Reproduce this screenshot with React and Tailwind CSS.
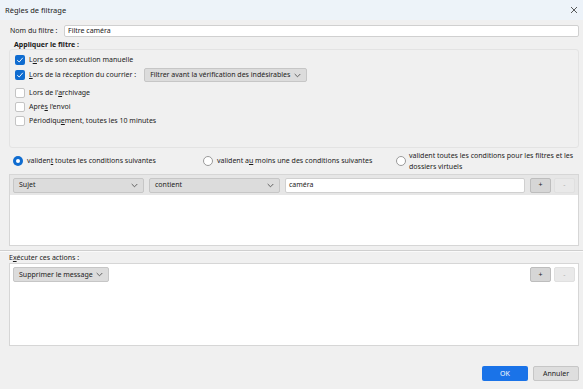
import React from "react";

function U({ children }) {
  return <span className="underline underline-offset-[1px]">{children}</span>;
}

function Check({ checked }) {
  return checked ? (
    <span className="w-[10px] h-[10px] rounded-[2px] bg-[#0f6cd0] flex items-center justify-center shrink-0">
      <svg width="8" height="8" viewBox="0 0 8 8">
        <path d="M1.2 4.2 L3.2 6 L6.8 1.8" fill="none" stroke="#fff" strokeWidth="0.9" />
      </svg>
    </span>
  ) : (
    <span className="w-[10px] h-[10px] rounded-[2px] bg-white border border-[#c4c4c4] shrink-0" />
  );
}

function Radio({ on }) {
  return on ? (
    <span className="w-[10px] h-[10px] rounded-full bg-[#0f6cd0] flex items-center justify-center shrink-0">
      <span className="w-[4px] h-[4px] rounded-full bg-white" />
    </span>
  ) : (
    <span className="w-[10px] h-[10px] rounded-full bg-white border border-[#9a9a9a] shrink-0" />
  );
}

function Chevron() {
  return (
    <svg width="7" height="5" viewBox="0 0 7 5" className="shrink-0">
      <path d="M0.7 1 L3.5 3.8 L6.3 1" fill="none" stroke="#444" strokeWidth="0.8" />
    </svg>
  );
}

function Select({ label, w }) {
  return (
    <div
      className={`h-[15px] ${w} rounded-[2px] bg-[#dcdcdc] border border-[#c6c6c6] flex items-center justify-between pl-[5px] pr-[5px] shrink-0`}
    >
      <span className="whitespace-nowrap">{label}</span>
      <Chevron />
    </div>
  );
}

function PlusMinus() {
  return (
    <div className="flex gap-[3px]">
      <div className="w-[21px] h-[15px] rounded-[2px] bg-[#d6d6d6] border border-[#bdbdbd] flex items-center justify-center text-[7px]">
        +
      </div>
      <div className="w-[21px] h-[15px] rounded-[2px] bg-[#e9e9e9] border border-[#e0e0e0] flex items-center justify-center text-[7px] text-[#b0b0b0]">
        -
      </div>
    </div>
  );
}

export default function App() {
  return (
    <div className="w-[583px] h-[389px] bg-[#f0f0f0] text-[#1b1b1b] text-[7px] leading-[10px] whitespace-nowrap font-['Segoe_UI','Noto_Sans',sans-serif] flex flex-col overflow-hidden">
      {/* barre de titre */}
      <div className="h-[20px] bg-[#edf3f9] flex items-center justify-between pl-[5px] pr-[5px] shrink-0">
        <span className="text-[7.5px]">Règles de filtrage</span>
        <svg width="8" height="8" viewBox="0 0 8 8">
          <path d="M1 1 L7 7 M7 1 L1 7" stroke="#333" strokeWidth="0.8" />
        </svg>
      </div>

      <div className="flex flex-col pl-[9px] pr-[4px] pt-[5px]">
        {/* nom du filtre */}
        <div className="flex items-center h-[12px]">
          <span className="pl-[1px] w-[55px] shrink-0">
            Nom du f<U>i</U>ltre :
          </span>
          <div className="flex-1 h-[12px] bg-white border border-[#d0d0d0] rounded-[2px] flex items-center pl-[3px]">
            Filtre caméra
          </div>
        </div>

        <div className="pl-[5px] mt-[4px] h-[8px] leading-[8px] font-bold">Appliquer le filtre :</div>

        <div className="h-[99px] border border-[#e3e3e3] rounded-[3px] flex flex-col pl-[5px] pt-[3px]">
          <div className="h-[14px] flex items-center gap-[4px]">
            <Check checked />
            <span>
              L<U>o</U>rs de son exécution manuelle
            </span>
          </div>
          <div className="h-[16px] flex items-center gap-[4px]">
            <Check checked />
            <span>
              <U>L</U>ors de la réception du courrier :
            </span>
            <div className="ml-[4px] h-[14px] rounded-[2px] bg-[#dcdcdc] border border-[#c6c6c6] flex items-center gap-[4px] px-[5px]">
              <span>Filtrer avant la vérification des indésirables</span>
              <Chevron />
            </div>
          </div>
          <div className="mt-[3px] h-[14px] flex items-center gap-[4px]">
            <Check />
            <span>
              Lors de l'<U>a</U>rchivage
            </span>
          </div>
          <div className="h-[14px] flex items-center gap-[4px]">
            <Check />
            <span>
              Aprè<U>s</U> l'envoi
            </span>
          </div>
          <div className="h-[14px] flex items-center gap-[4px]">
            <Check />
            <span>
              Périodiqu<U>e</U>ment, toutes les 10 minutes
            </span>
          </div>
        </div>

        {/* type de correspondance */}
        <div className="h-[26px] flex items-center pl-[4px]">
          <div className="w-[190px] flex items-center gap-[4px]">
            <Radio on />
            <span>
              validen<U>t</U> toutes les conditions suivantes
            </span>
          </div>
          <div className="w-[193px] flex items-center gap-[4px]">
            <Radio />
            <span>
              valident a<U>u</U> moins une des conditions suivantes
            </span>
          </div>
          <div className="flex-1 flex items-center gap-[3px]">
            <Radio />
            <span className="leading-[11px]">
              valident toutes les conditions pour les f<U>i</U>ltres et les
              <br />
              dossiers virtuels
            </span>
          </div>
        </div>

        {/* conditions */}
        <div className="h-[72px] border border-[#d6d6d6] bg-white flex flex-col">
          <div className="h-[20px] bg-[#e6e6e6] flex items-center gap-[5px] px-[3px]">
            <Select label="Sujet" w="w-[131px]" />
            <Select label="contient" w="w-[131px]" />
            <div className="flex-1 h-[15px] bg-white border border-[#d0d0d0] rounded-[2px] flex items-center pl-[3px]">
              caméra
            </div>
            <PlusMinus />
          </div>
        </div>
      </div>

      {/* séparateur */}
      <div className="mt-[4px] h-[2px] border-t border-[#cfcfcf] border-b border-b-[#fafafa]" />

      <div className="flex flex-col pl-[9px] pr-[4px]">
        <div className="h-[11px] flex items-center">
          E<U>x</U>écuter ces actions :
        </div>
        <div className="h-[83px] border border-[#d6d6d6] bg-white flex items-start justify-between px-[3px] pt-[3px]">
          <div className="h-[15px] w-[96px] rounded-[2px] bg-[#dcdcdc] border border-[#c6c6c6] flex items-center justify-between px-[5px]">
            <span>Supprimer le message</span>
            <Chevron />
          </div>
          <PlusMinus />
        </div>

        <div className="flex justify-end gap-[5px] mt-[20px]">
          <div className="w-[46px] h-[15px] rounded-[2px] bg-[#1a73e8] text-white flex items-center justify-center">
            OK
          </div>
          <div className="w-[46px] h-[15px] rounded-[2px] bg-[#dedede] border border-[#c6c6c6] flex items-center justify-center">
            Annuler
          </div>
        </div>
      </div>
    </div>
  );
}
